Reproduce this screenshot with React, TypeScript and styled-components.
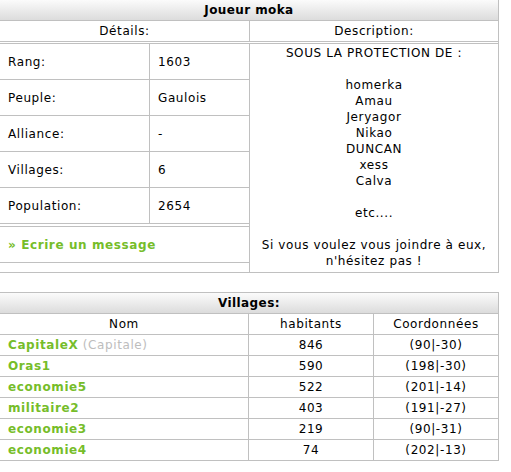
import React from "react";
import styled, { createGlobalStyle } from "styled-components";

const Global = createGlobalStyle`
  body {
    margin: 0;
    background: #fff;
    font-family: "DejaVu Sans", Verdana, sans-serif;
    font-size: 12px;
    letter-spacing: 0.6px;
    color: #000;
  }
`;

const LINE = "#c0c0c0";
const GREEN = "#76bd2a";

const Page = styled.div`
  width: 499px;
`;

const Panel = styled.section<{ $top?: boolean; $gap?: number }>`
  box-sizing: border-box;
  width: 499px;
  border-right: 1px solid ${LINE};
  border-bottom: 1px solid ${LINE};
  ${(p) => (p.$top ? `border-top: 1px solid ${LINE};` : "")}
  margin-top: ${(p) => p.$gap ?? 0}px;
`;

const Header = styled.div`
  height: 20px;
  line-height: 20px;
  text-align: center;
  font-weight: bold;
  letter-spacing: 0.4px;
  background: linear-gradient(to bottom, #fbfbfb, #dcdcdc);
  border-bottom: 1px solid ${LINE};
`;

const SubHead = styled.div`
  display: grid;
  grid-template-columns: 250px 1fr;
  border-bottom: 1px solid ${LINE};
`;

const SubCell = styled.div<{ $divider?: boolean }>`
  height: 20px;
  line-height: 20px;
  text-align: center;
  ${(p) => (p.$divider ? `border-right: 1px solid ${LINE};` : "")}
`;

const Body = styled.div`
  display: grid;
  grid-template-columns: 250px 1fr;
  margin-top: 1px;
  border-top: 1px solid ${LINE};
`;

const LeftCol = styled.div`
  border-right: 1px solid ${LINE};
`;

const StatRow = styled.div`
  display: grid;
  grid-template-columns: 150px 1fr;
  height: 35px;
  border-bottom: 1px solid ${LINE};
`;

const StatCell = styled.div<{ $divider?: boolean }>`
  display: flex;
  align-items: center;
  padding-left: 8px;
  ${(p) => (p.$divider ? `border-right: 1px solid ${LINE};` : "")}
`;

const MessageRow = styled.div`
  margin-top: 2px;
  height: 35px;
  display: flex;
  align-items: center;
  padding-left: 8px;
  border-top: 1px solid ${LINE};
  border-bottom: 1px solid ${LINE};
`;

const GreenLink = styled.a`
  color: ${GREEN};
  font-weight: bold;
  text-decoration: none;
`;

const Description = styled.div`
  padding: 1px 0 3px;
  text-align: center;
  line-height: 16px;
  white-space: pre-line;
`;

const VillageGrid = styled.div`
  display: grid;
  grid-template-columns: 249px 125px 1fr;
`;

const Cell = styled.div<{ $align?: "left" | "center"; $divider?: boolean; $last?: boolean }>`
  height: 20px;
  line-height: 20px;
  text-align: ${(p) => p.$align ?? "center"};
  padding-left: ${(p) => (p.$align === "left" ? "8px" : "0")};
  ${(p) => (p.$divider ? `border-right: 1px solid ${LINE};` : "")}
  ${(p) => (p.$last ? "" : `border-bottom: 1px solid ${LINE};`)}
  white-space: nowrap;
`;

const Muted = styled.span`
  color: #bdbdbd;
`;

const stats: [string, string][] = [
  ["Rang:", "1603"],
  ["Peuple:", "Gaulois"],
  ["Alliance:", "-"],
  ["Villages:", "6"],
  ["Population:", "2654"],
];

const descText = `SOUS LA PROTECTION DE :

homerka
Amau
Jeryagor
Nikao
DUNCAN
xess
Calva

etc....

Si vous voulez vous joindre à eux,
n'hésitez pas !`;

const villages: { name: string; capital?: boolean; pop: string; coords: string }[] = [
  { name: "CapitaleX", capital: true, pop: "846", coords: "(90|-30)" },
  { name: "Oras1", pop: "590", coords: "(198|-30)" },
  { name: "economie5", pop: "522", coords: "(201|-14)" },
  { name: "militaire2", pop: "403", coords: "(191|-27)" },
  { name: "economie3", pop: "219", coords: "(90|-31)" },
  { name: "economie4", pop: "74", coords: "(202|-13)" },
];

export default function App() {
  return (
    <Page>
      <Global />
      <Panel>
        <Header>Joueur moka</Header>
        <SubHead>
          <SubCell $divider>Détails:</SubCell>
          <SubCell>Description:</SubCell>
        </SubHead>
        <Body>
          <LeftCol>
            {stats.map(([k, v]) => (
              <StatRow key={k}>
                <StatCell $divider>{k}</StatCell>
                <StatCell>{v}</StatCell>
              </StatRow>
            ))}
            <MessageRow>
              <GreenLink href="#">» Ecrire un message</GreenLink>
            </MessageRow>
          </LeftCol>
          <Description>{descText}</Description>
        </Body>
      </Panel>

      <Panel $top $gap={19}>
        <Header>Villages:</Header>
        <VillageGrid>
          <Cell $divider>Nom</Cell>
          <Cell $divider>habitants</Cell>
          <Cell>Coordonnées</Cell>
          {villages.map((v, i) => {
            const last = i === villages.length - 1;
            return (
              <React.Fragment key={v.name}>
                <Cell $align="left" $divider $last={last}>
                  <GreenLink href="#">{v.name}</GreenLink>
                  {v.capital && <Muted> (Capitale)</Muted>}
                </Cell>
                <Cell $divider $last={last}>{v.pop}</Cell>
                <Cell $last={last}>{v.coords}</Cell>
              </React.Fragment>
            );
          })}
        </VillageGrid>
      </Panel>
    </Page>
  );
}
